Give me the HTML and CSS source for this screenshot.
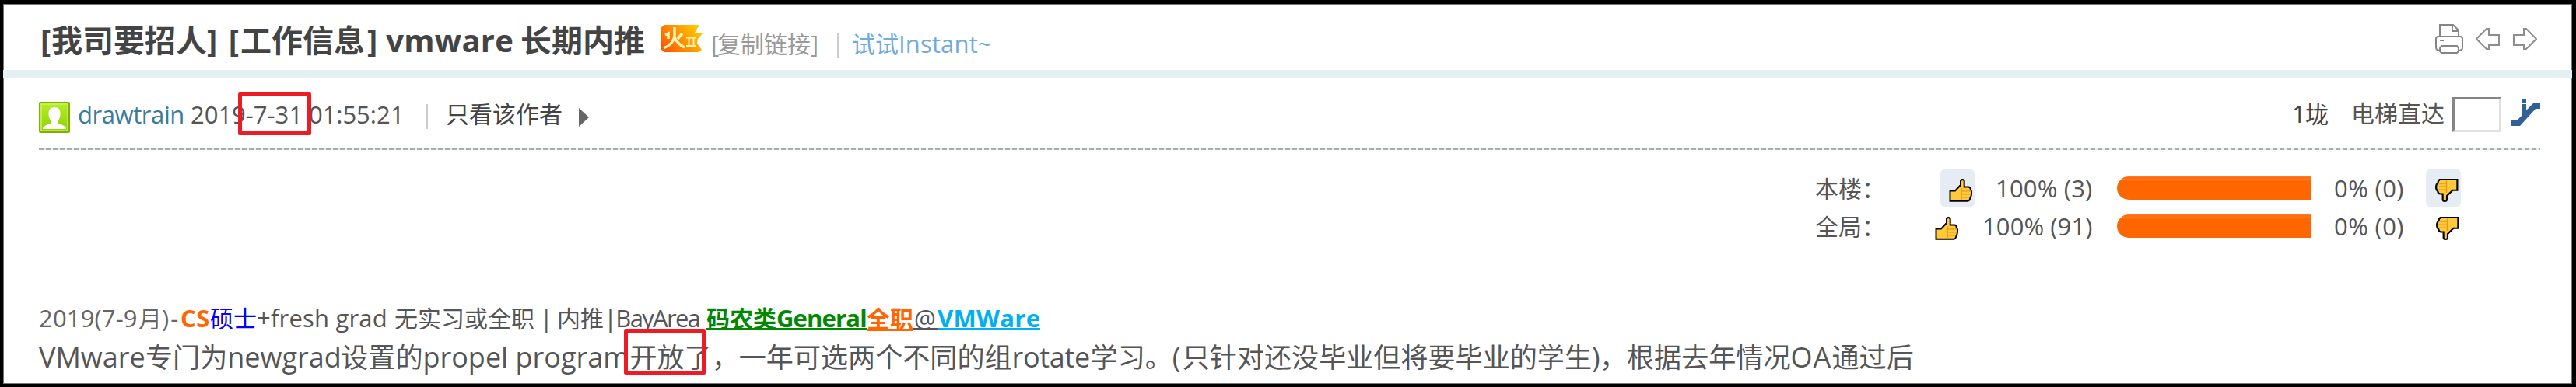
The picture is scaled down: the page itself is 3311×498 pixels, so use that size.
FILE: index.html
```html
<!DOCTYPE html>
<html lang="zh-CN">
<head>
<meta charset="utf-8">
<title>[我司要招人] [工作信息] vmware 长期内推</title>
<link rel="stylesheet" href="styles.css">
</head>
<body>
<svg class="defs" aria-hidden="true">
  <symbol id="thumb" viewBox="0 0 30 30">
    <path d="M1.5 15.5H8L15 8V3.5Q15 1 17.3 1T19.7 3.5V10.5H25Q27.5 10.5 27.8 13.5Q29.5 16 29 19.5Q29 22 27.5 24Q27 28.8 24 28.8H1.5Z" fill="#ffc83d" stroke="#000" stroke-width="2"/>
    <path d="M16.2 12V27.5M16 15.8H27M16 19.8H27M16 23.8H26" fill="none" stroke="#e39d11" stroke-width="1.3"/>
  </symbol>
  <symbol id="thumb-down" viewBox="0 0 28 30" preserveAspectRatio="none">
    <path d="M26.5 1H5.5Q3.5 2 3.2 5.5Q1 7 1 10.5Q1 14.500 3 16Q3.500 19.500 6 19.500H9V26.500Q9 29 11.500 29T14 26.500V22L21 14.800H26.500Z" fill="#ffc83d" stroke="#000" stroke-width="2"/>
    <path d="M13.500 2.500V18M3 6H13.500M2 10.200H13.500M3.500 14.200H13.500" fill="none" stroke="#e39d11" stroke-width="1.300"/>
  </symbol>
</svg>
<div class="page">
  <header class="head">
    <h1 class="title"><span class="s t1">[</span>我司要招人<span class="s t2">] [</span>工作信息<span class="s t3">] vmware </span>长期内推</h1>
    <svg class="hot" viewBox="0 0 55 35">
      <defs><linearGradient id="fire" x1="0" x2="1" y1=".7" y2=".2"><stop offset="0" stop-color="#ff5a00"/><stop offset=".55" stop-color="#ff9c00"/><stop offset="1" stop-color="#ffd000"/></linearGradient></defs>
      <path d="M5 0H50L44 10H55L48 18L47 24L53 32L48 35H5L0 31V4Z" fill="url(#fire)"/>
      <path d="M18 3V15Q16 25 4 30M18 16Q22 25 31 29M6 13L10 11V18M28 11L22 18" fill="none" stroke="#fff3b5" stroke-width="3.500"/>
      <path d="M33 16.500H46M33 27H46M36.500 16V27M42.500 16V27" fill="none" stroke="#fff3b5" stroke-width="2"/>
    </svg>
    <span class="copy"><span class="s c1">[</span>复制链接<span class="s c1">]</span></span>
    <i class="sep sep-head"></i>
    <a class="instant">试试<span class="s c2">Instant~</span></a>
    <div class="tools">
      <svg width="36" height="38" viewBox="0 0 36 38"><g fill="none" stroke="#868686" stroke-width="2"><path d="M6 16V1H23L30 8V16M22 1V9H30"/><path d="M6 34Q1 34 1 30V19Q1 16 4 16H32Q35 16 35 19V30Q35 34 30 34"/><path d="M8 28H28L30 31V35L28 37H8L6 35V31Z"/><path d="M6 21H11"/></g></svg>
      <svg class="prev" width="31" height="28" viewBox="0 0 31 28"><path d="M1 14L14 1H17V9H30V22H17V27H14Z" fill="none" stroke="#8d8d8d" stroke-width="2"/></svg>
      <svg class="next" width="31" height="28" viewBox="0 0 31 28"><path d="M30 14L17 1H14V9H1V22H14V27H17Z" fill="none" stroke="#8d8d8d" stroke-width="2"/></svg>
    </div>
  </header>
  <div class="info">
    <svg class="avatar" width="40" height="40" viewBox="0 0 40 40">
      <defs><linearGradient id="lime" x1="0" x2="0" y1="0" y2="1"><stop offset="0" stop-color="#b5ee2c"/><stop offset="1" stop-color="#8fd000"/></linearGradient></defs>
      <rect x="1" y="1" width="38" height="38" rx="1" fill="url(#lime)" stroke="#7fb000" stroke-width="2"/>
      <rect x="3" y="3" width="34" height="34" fill="none" stroke="#c9f25e" stroke-width="1.500"/>
      <path d="M5 35Q5 31 12 29Q17 28 16 25Q12 21 12.500 14Q13 7 20 7T27.500 14Q28 21 24 25Q23 28 28 29Q35 31 35 35Z" fill="#fff"/>
    </svg>
    <a class="author"><span class="s a1">drawtrain </span></a>
    <span class="s date">2019-7-31 01:55:21<i class="mark mark-date"></i></span>
    <i class="sep sep-info"></i>
    <span class="only">只看该作者</span>
    <svg class="arrow" width="13" height="24" viewBox="0 0 13 24"><path d="M0 0L13 12L0 24Z" fill="#666"/></svg>
    <div class="jump">
      <span class="floor"><span class="s f1">1</span>垅</span>
      <span class="direct">电梯直达</span>
      <input class="box" type="text" aria-label="电梯直达">
      <svg class="lift" width="38" height="36" viewBox="0 0 38 36"><path d="M0 28H8L15 21V7H20V15L29 6H38V13H32L12 35H0ZM15 0H20V5H15Z" fill="#2f6096"/></svg>
    </div>
  </div>
  <div class="rule"></div>
  <div class="votes">
    <div class="vote">
      <span class="scope">本楼：</span>
      <span class="up"><b class="btn btn-up"><svg width="30" height="30"><use href="#thumb"/></svg></b><span class="s v1">100% (3)</span></span>
      <i class="bar"></i><span class="s v3">0% (0)</span>
      <b class="btn btn-down"><svg width="30" height="30"><use href="#thumb-down"/></svg></b>
    </div>
    <div class="vote">
      <span class="scope">全局：</span>
      <span class="up"><b class="btn plain-up"><svg width="30" height="30"><use href="#thumb"/></svg></b><span class="s v2">100% (91)</span></span>
      <i class="bar"></i><span class="s v3">0% (0)</span>
      <b class="btn plain-down"><svg width="30" height="30"><use href="#thumb-down"/></svg></b>
    </div>
  </div>
  <article class="post">
    <p class="tags"><span class="dim"><span class="s p1">2019(7-9</span>月<span class="s p2">)-</span></span><b class="s p3">CS</b><span class="blue">硕士</span><span class="s p4">+fresh grad </span>无实习或全职<span class="s p5"> | </span>内推<span class="s p6">|BayArea </span><b class="u green">码农类<span class="s p7">General</span></b><b class="u orange">全职</b><span class="u"><span class="s p8">@</span></span><b class="u cyan"><span class="s p9">VMWare</span></b></p>
    <p class="body"><span class="s q1">VMware</span>专门为<span class="s q2">newgrad</span>设置的<span class="s q3">propel program</span><span class="marked">开放了<i class="mark mark-open"></i></span>，一年可选两个不同的组<span class="s q4">rotate</span>学习。<span class="s q5">(</span>只针对还没毕业但将要毕业的学生<span class="s q6">)</span>，根据去年情况<span class="s q7">OA</span>通过后</p>
  </article>
</div>
</body>
</html>
```
FILE: styles.css
```css
* { box-sizing: border-box; }
body { margin: 0; background: #000; }
.defs { position: absolute; width: 0; height: 0; }

.page {
  width: 3311px;
  height: 498px;
  overflow: hidden;
  background: #fff;
  border: 5px solid #000;
  border-bottom-width: 4px;
  border-left-width: 4px;
  box-shadow: inset 0 0 0 1px #777;
  color: #555;
  font: 30px/40px "Open Sans", "Noto Sans CJK SC", sans-serif;
  white-space: nowrap;
}
i, b { font-style: normal; }
svg { display: block; flex: none; }

/* Latin runs keep a fixed measure between the CJK runs */
.s { display: inline-block; font-size: 31px; white-space: pre; }

.head {
  display: flex;
  align-items: flex-start;
  height: 95px;
  padding: 21px 0 0 48px;
  border-bottom: 10px solid #e5f0f6;
}
.title { margin: 0; width: 797px; font-size: 40px; line-height: 52px; font-weight: 700; color: #444; }
.title .s { font-size: 40px; }
.t1 { width: 14px; }
.t2 { width: 43px; letter-spacing: 2px; }
.t3 { width: 200px; padding-left: 3px; letter-spacing: .3px; }
.hot { width: 55px; height: 35px; margin-top: 6px; }
.copy { margin: 10px 0 0 10px; width: 138px; color: #999; }
.c1 { width: 8px; letter-spacing: -2px; }
.sep { flex: none; width: 3px; height: 32px; background: #ccc; }
.sep-head { margin: 16px 0 0 24px; }
.instant { margin: 10px 0 0 16px; color: #6facdc; }
.c2 { width: 119px; letter-spacing: .15px; }
.tools { display: flex; margin: 5px 45px 0 auto; }
.prev { margin: 5px 0 0 16px; }
.next { margin: 5px 0 0 17px; }

.info { display: flex; height: 90px; padding: 27px 41px 0 46px; }
.avatar { margin-top: 4px; }
.author { margin-left: 10px; color: #3c7c98; }
.a1 { width: 145px; letter-spacing: -.42px; }
.date { position: relative; width: 276px; letter-spacing: -.02px; }
.mark { position: absolute; border: 5px solid #ed1c24; border-radius: 2px; }
.mark-date { left: 61px; top: -8px; width: 94px; height: 55px; }
.sep-info { margin: 7px 0 0 26px; }
.only { margin-left: 23px; color: #444; }
.arrow { margin: 12px 0 0 21px; }
.jump { display: flex; margin-left: auto; margin-top: -2px; }
.floor { width: 76px; color: #444; }
.floor, .direct { padding-top: 1px; }
.f1 { width: 17px; }
.box { width: 63px; height: 45px; margin: 0 0 0 10px; padding: 0; border: 3px solid; border-color: #858585 #e0e0e0 #e0e0e0 #858585; background: #fff; }
.lift { margin: 2px 0 0 12px; }

.rule {
  height: 3px;
  margin: 0 41px 0 46px;
  background: repeating-linear-gradient(90deg, #a6aeb0 0 6px, #e8efef 6px 9px);
}

.votes { padding: 24px 0 0 2329px; }
.vote { display: flex; height: 49px; }
.scope { width: 100px; line-height: 51px; }
.vote .s { line-height: 51px; }
.up { display: flex; justify-content: flex-end; width: 257px; }
.btn { display: block; flex: none; height: 50px; padding-top: 13px; border-radius: 7px; }
.btn-up { width: 44px; padding-left: 11px; margin-right: 27px; background: #e5ecf3; }
.btn-down { width: 45px; padding-left: 12px; margin-left: 28px; background: #e5ecf3; }
.plain-up { width: 30px; margin-right: 31px; }
.plain-down { margin-left: 41px; }
.v1 { width: 125px; letter-spacing: .2px; }
.v2 { width: 142px; letter-spacing: .1px; }
.v3 { width: 90px; letter-spacing: .4px; }
.bar {
  flex: none;
  width: 250px;
  height: 30px;
  margin: 10px 29px 0 31px;
  border-radius: 15px 0 0 15px;
  background: linear-gradient(#ff7c26 0 1px, #ff6a0c 1px 2px, #ff7a20 4px, #f60 6px);
}

.post { padding: 74px 0 0 46px; }
.post p { margin: 0; }
.tags { height: 48px; color: #555; }
.dim { color: #666; }
.blue { color: #00f; }
.u { display: inline-block; position: relative; }
.u::after { content: ""; position: absolute; left: 0; right: 0; top: 33px; height: 3px; background: currentColor; }
.green { color: #080; }
.orange, .p3 { color: #f60; }
.cyan { color: #00b0f0; }
.p1 { width: 128px; letter-spacing: .15px; }
.p2 { width: 24px; letter-spacing: 2px; }
.p3 { width: 38px; letter-spacing: .6px; }
.p4 { width: 177px; letter-spacing: .2px; }
.p5 { width: 29px; letter-spacing: -1.3px; }
.p6 { width: 132px; letter-spacing: -1.7px; }
.p7 { width: 116px; letter-spacing: -.85px; }
.p8 { width: 31px; padding-left: 1px; }
.p9 { width: 132px; letter-spacing: .3px; }
.body { font-size: 35.1px; line-height: 44px; }
.body .s { font-size: 36px; }
.q1 { width: 137px; }
.q2 { width: 146px; }
.q3 { width: 266px; }
.q4 { width: 101px; letter-spacing: -.3px; }
.q5 { width: 13px; }
.q6 { width: 10px; }
.q7 { width: 53px; letter-spacing: 1px; }
.marked { position: relative; }
.mark-open { left: -7px; top: -11px; width: 105px; height: 58px; }
```
